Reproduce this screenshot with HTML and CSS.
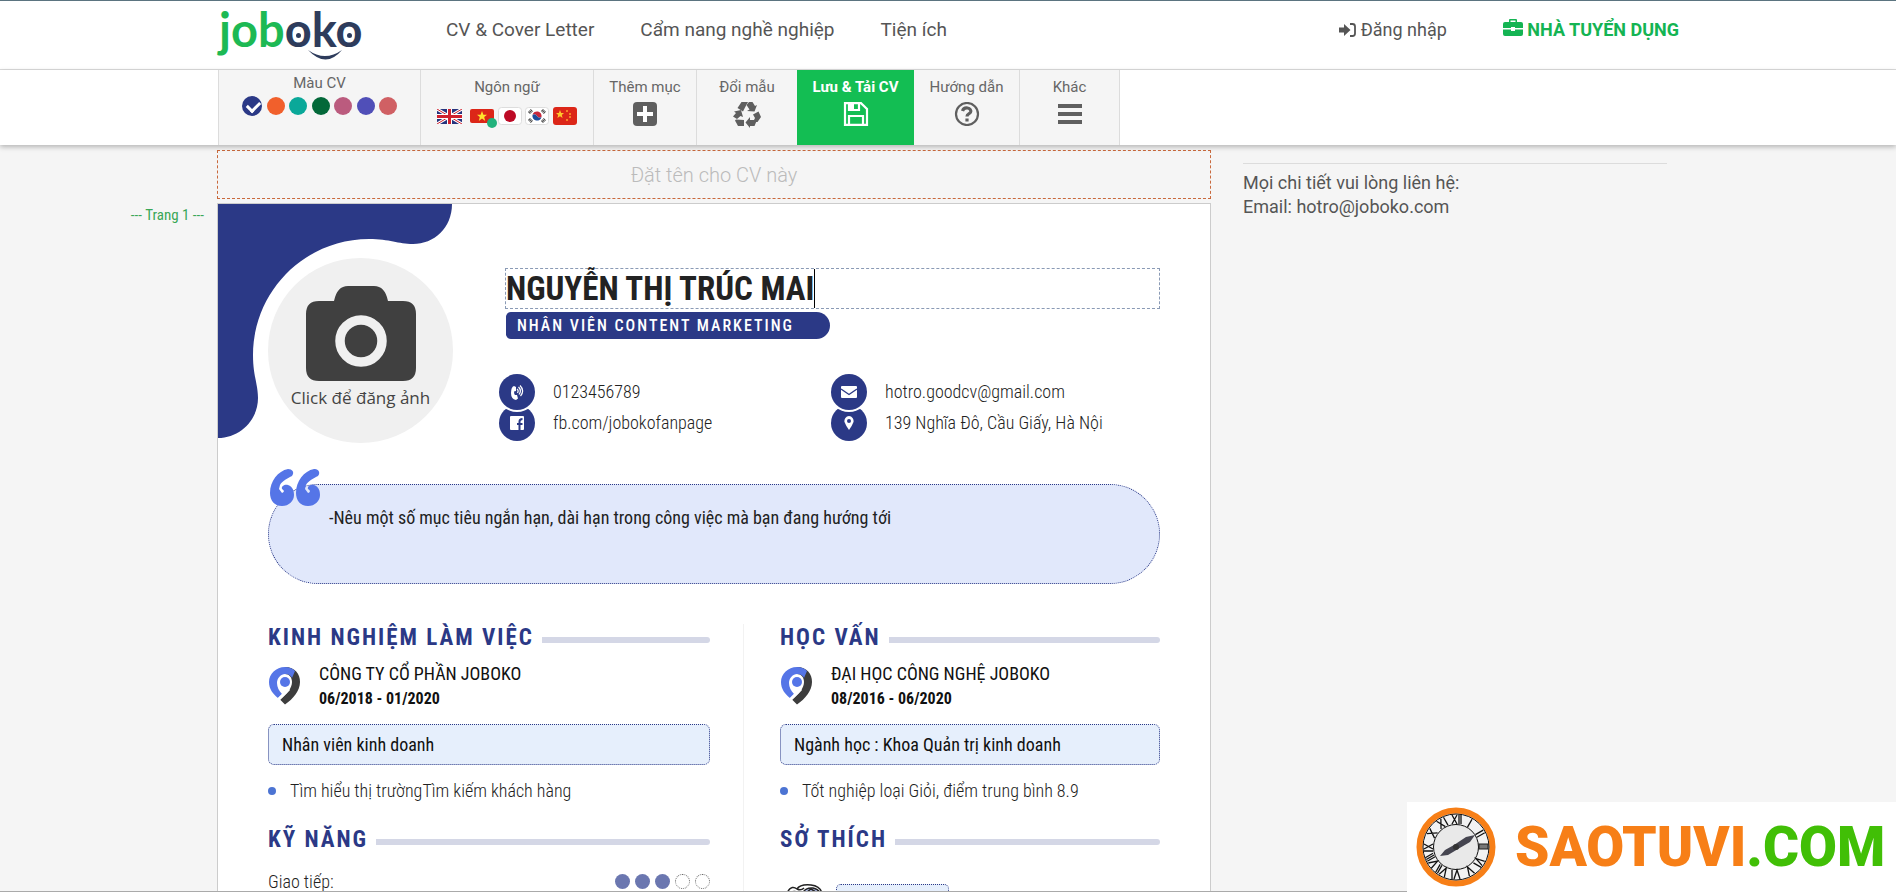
FILE: index.html
```html
<!DOCTYPE html>
<html lang="vi">
<head>
<meta charset="utf-8">
<meta name="viewport" content="width=device-width, initial-scale=1">
<title>Joboko CV</title>
<link rel="stylesheet" href="styles.css">
</head>
<body>
<svg class="defs" aria-hidden="true">
  <symbol id="pin" viewBox="0 0 32 40">
    <path fill="#3d3d3d" d="M16 1C26 1 31 8 31 16C31 25 24 33 16 38.500L11 33.500C18 28 23 22 23 16C23 11 20 8 16 8Z"/>
    <path fill="#5575e7" d="M16 1C7 1 0 8 0 16C0 23 4 28 9 32L13 28C10 25 8 21 8 17C8 12 12 8 16 8C20 8 22 10 23 12L26 5C23 2 20 1 16 1Z"/>
    <circle cx="16" cy="16" r="5" fill="#5575e7"/>
    <path fill="none" stroke="#fff" stroke-width="3" d="M10 33L20 23"/>
  </symbol>
</svg>

<header class="header">
  <div class="container header-row">
    <a class="logo" href="#" aria-label="joboko"><span class="logo-job">job</span><span class="logo-oko"><span class="eye">o</span>k<span class="eye">o</span></span>
      <svg class="logo-smile" viewBox="0 0 34 10" aria-hidden="true"><path fill="#2e3c5c" d="M0 0Q17 12 34 0Q18 19 0 0Z"/></svg>
    </a>
    <nav class="menu">
      <a href="#">CV &amp; Cover Letter</a>
      <a href="#">Cẩm nang nghề nghiệp</a>
      <a href="#">Tiện ích</a>
    </nav>
    <div class="account">
      <a href="#"><svg width="17" height="14" viewBox="0 0 17 14" aria-hidden="true"><path fill="#555" d="M0 4.500H5V1L11.500 7L5 13V9.500H0Z"/><path fill="none" stroke="#555" stroke-width="1.800" d="M11 1H13.500Q16 1 16 3.500V10.500Q16 13 13.500 13H11"/></svg> Đăng nhập</a>
      <a class="employer" href="#"><svg width="20" height="18" viewBox="0 0 20 18" aria-hidden="true"><path fill="#14b453" d="M6 3V1Q6 0 7 0H13Q14 0 14 1V3H18Q20 3 20 5V9H12V8H8V9H0V5Q0 3 2 3ZM7.500 3H12.500V1.500H7.500ZM0 10.500H8V12H12V10.500H20V15Q20 17 18 17H2Q0 17 0 15Z"/></svg> NHÀ TUYỂN DỤNG</a>
    </div>
  </div>
</header>

<div class="toolbar">
  <div class="container tools">
    <fieldset class="tool tool-colors">
      <legend class="tool-label">Màu CV</legend>
      <div class="swatches">
        <input class="swatch navy" type="radio" name="color" aria-label="Xanh navy" checked>
        <input class="swatch orange" type="radio" name="color" aria-label="Cam">
        <input class="swatch teal" type="radio" name="color" aria-label="Xanh ngọc">
        <input class="swatch green" type="radio" name="color" aria-label="Xanh lá">
        <input class="swatch pink" type="radio" name="color" aria-label="Hồng">
        <input class="swatch violet" type="radio" name="color" aria-label="Tím">
        <input class="swatch coral" type="radio" name="color" aria-label="San hô">
      </div>
    </fieldset>
    <div class="tool tool-lang">
      <span class="tool-label">Ngôn ngữ</span>
      <div class="flags">
        <button class="flag" aria-label="English"><svg width="25" height="15" viewBox="0 0 25 15"><rect width="25" height="15" rx="2" fill="#26337d"/><path stroke="#fff" stroke-width="3" d="M0 0L25 15M25 0L0 15"/><path stroke="#d0202e" stroke-width="1" d="M0 0L25 15M25 0L0 15"/><path stroke="#fff" stroke-width="5" d="M12.500 0V15M0 7.500H25"/><path stroke="#d0202e" stroke-width="3" d="M12.500 0V15M0 7.500H25"/></svg></button>
        <button class="flag flag-current" aria-label="Tiếng Việt"><svg width="24" height="14" viewBox="0 0 24 14"><rect width="24" height="14" rx="2" fill="#dc2618"/><path fill="#ffe42c" d="M12 2L13.400 5.800H17L14.200 8L15.200 12L12 9.600L8.800 12L9.800 8L7 5.800H10.600Z"/></svg></button>
        <button class="flag" aria-label="日本語"><svg width="24" height="18" viewBox="0 0 24 18"><rect x=".5" y=".5" width="23" height="17" rx="3" fill="#fff" stroke="#ddd"/><circle cx="12" cy="9" r="6" fill="#bd0a25"/></svg></button>
        <button class="flag" aria-label="한국어"><svg width="24" height="18" viewBox="0 0 24 18"><rect x=".5" y=".5" width="23" height="17" rx="3" fill="#fff" stroke="#ddd"/><path fill="#c8283c" d="M7.500 8A4.500 4.500 0 0 1 16.500 10Q14 12 12 9T7.500 8"/><path fill="#1d4d9c" d="M7.500 8A4.500 4.500 0 0 0 16.500 10Q14 12 12 9T7.500 8"/><path stroke="#444" stroke-width="3" stroke-dasharray="1 .5" d="M4 6L7 3M17 3L20 6M4 12L7 15M17 15L20 12"/></svg></button>
        <button class="flag" aria-label="中文"><svg width="24" height="18" viewBox="0 0 24 18"><rect width="24" height="18" rx="3" fill="#dc2618"/><path fill="#ffc72c" d="M7 3L8.200 6H11L8.800 8L9.600 11L7 9.300L4.400 11L5.200 8L3 6H5.800Z"/><circle cx="14" cy="4" r="1" fill="#ffa02c"/><circle cx="17" cy="7" r="1" fill="#ffa02c"/><circle cx="17" cy="10" r="1" fill="#ffa02c"/><circle cx="14" cy="13" r="1" fill="#ffa02c"/></svg></button>
      </div>
    </div>
    <button class="tool tool-add"><span class="tool-label">Thêm mục</span><svg width="26" height="24" viewBox="0 0 26 24"><rect x="1" width="24" height="24" rx="4" fill="#5f5f5f"/><path stroke="#fff" stroke-width="4" d="M13 4V20M5 12H21"/></svg></button>
    <button class="tool tool-swap"><span class="tool-label">Đổi mẫu</span><svg width="28" height="26" viewBox="0 0 28 26"><g fill="#5f5f5f"><path d="M8.500 0H15L12 5.500L10 9.500L4.500 6Z"/><path d="M16 0H19.500L22 4L24 3L21.500 9.500L14 9L16.500 7.500L13.500 3Z"/><path d="M20 12.500L25.500 9.500L28 15L24.500 20H20L22 16Z"/><path d="M17 15V18H24L21.500 24H17V26L12.500 20.500Z"/><path d="M11 18V24H5L2 18.500L3 17.500Z"/><path d="M1 9.500L8 8L10 15L7.500 14L4 17L0 14.500L3 11Z"/></g></svg></button>
    <button class="tool tool-save"><span class="tool-label">Lưu &amp; Tải CV</span><svg width="26" height="24" viewBox="0 0 26 24" fill="none" stroke="#fff" stroke-width="2.200"><path d="M2 1.200H18L24 7V22.800H2Z"/><path d="M6 1V8H16V1M6 23V14H20V23"/><path d="M8.500 1V8" stroke-width="5"/></svg></button>
    <button class="tool tool-help"><span class="tool-label">Hướng dẫn</span><svg width="26" height="24" viewBox="0 0 26 24" fill="none" stroke="#5f5f5f"><circle cx="13" cy="12" r="11" stroke-width="2.200"/><path stroke-width="3.200" d="M8.500 9C9.500 6 12 5.800 13.500 6C16 6.300 17.500 8.500 16.500 10.300C15.500 12 13 12 13 14.500M13 16.500V19.500"/></svg></button>
    <button class="tool tool-more"><span class="tool-label">Khác</span><svg width="26" height="24" viewBox="0 0 26 24"><path stroke="#5f5f5f" stroke-width="4" d="M1 4H25M1 12H25M1 20H25"/></svg></button>
  </div>
</div>

<main class="main">
  <aside class="page-label">--- Trang 1 ---</aside>
  <div class="editor">
    <input class="cv-name" type="text" placeholder="Đặt tên cho CV này" aria-label="Đặt tên cho CV này">
    <article class="cv">
      <svg class="cv-blob" width="235" height="235" viewBox="0 0 235 235" aria-hidden="true"><path fill="#2b3986" d="M0 0H234C234 24 216 40 195 40C180 40 172 35 151 35C87 35 35 87 35 151C35 172 40 180 40 194C40 216 22 234 0 234Z"/></svg>
      <section class="intro">
        <button class="avatar">
          <svg width="112" height="96" viewBox="0 0 112 96" aria-hidden="true"><path fill="#404040" d="M1 29Q1 16 14 16H29Q32 1 43 1H69Q80 1 83 16H98Q111 16 111 29V83Q111 96 98 96H14Q1 96 1 83Z"/><circle cx="56" cy="56" r="21" fill="#404040" stroke="#f0f0f0" stroke-width="9.500"/></svg>
          <span>Click để đăng ảnh</span>
        </button>
        <div class="identity">
          <div class="name-box"><input class="person" type="text" value="NGUYỄN THỊ TRÚC MAI" aria-label="Họ tên"><span class="caret"></span></div>
          <p class="position">NHÂN VIÊN CONTENT MARKETING</p>
          <ul class="contacts">
            <li><span class="badge"><svg width="14" height="16" viewBox="0 0 14 16"><path fill="#fff" d="M4 2L6 3V7L4 7.500Q4 10 5 11L7 11L8 14.500L6 16Q1 15 1 9Q1 3 4 2"/><path fill="none" stroke="#fff" stroke-width="1.200" d="M7 5Q9 6.500 7.500 9M8.500 3Q12 6.500 9 10.500M10 1.500Q15 6.500 10.500 12"/></svg></span>0123456789</li>
            <li><span class="badge"><svg width="16" height="12" viewBox="0 0 16 12"><rect width="16" height="12" rx="1" fill="#fff"/><path fill="none" stroke="#2b3986" stroke-width="1.400" d="M0 3L8 8.500L16 3"/></svg></span>hotro.goodcv@gmail.com</li>
            <li><span class="badge"><svg width="14" height="14" viewBox="0 0 14 14"><rect width="14" height="14" rx="1" fill="#fff"/><path fill="none" stroke="#2b3986" stroke-width="2" d="M9.500 14V5.500Q9.500 3 12.500 3M7 8H12.500"/></svg></span>fb.com/jobokofanpage</li>
            <li><span class="badge"><svg width="10" height="14" viewBox="0 0 10 14"><path fill="#fff" fill-rule="evenodd" d="M5 0A5 5 0 0 1 9.500 6Q8 10 5 14Q2 10 .5 6A5 5 0 0 1 5 0M5 3A2 2 0 1 0 5 7A2 2 0 1 0 5 3"/></svg></span>139 Nghĩa Đô, Cầu Giấy, Hà Nội</li>
          </ul>
        </div>
      </section>
      <section class="goal">
        <svg class="quote" width="50" height="37" viewBox="0 0 50 37" aria-hidden="true"><g id="q" fill="#5575e7"><path d="M18 0C22 0 25 3 22 7C18 9 12 12 10 16L9 20L12 24C15 23 14 21 12 20C11 17 15 15 18 16C23 18 24 22 24 26C24 32 19 37 12 37C4 37 0 31 0 24C0 12 8 2 18 0Z"/></g><use href="#q" x="26"/></svg>
        <p>-Nêu một số mục tiêu ngắn hạn, dài hạn trong công việc mà bạn đang hướng tới</p>
      </section>
      <div class="columns">
        <div class="column">
          <section class="block">
            <h2>KINH NGHIỆM LÀM VIỆC</h2>
            <div class="place"><svg width="32" height="40"><use href="#pin"/></svg><div><p>CÔNG TY CỔ PHẦN JOBOKO</p><p class="dates">06/2018 - 01/2020</p></div></div>
            <p class="role">Nhân viên kinh doanh</p>
            <ul class="details"><li>Tìm hiểu thị trườngTìm kiếm khách hàng</li></ul>
          </section>
          <section class="block">
            <h2>KỸ NĂNG</h2>
            <div class="skill"><span>Giao tiếp:</span><span class="dots"><i class="on"></i><i class="on"></i><i class="on"></i><i></i><i></i></span></div>
          </section>
        </div>
        <div class="column">
          <section class="block">
            <h2>HỌC VẤN</h2>
            <div class="place"><svg width="32" height="40"><use href="#pin"/></svg><div><p>ĐẠI HỌC CÔNG NGHỆ JOBOKO</p><p class="dates">08/2016 - 06/2020</p></div></div>
            <p class="role">Ngành học : Khoa Quản trị kinh doanh</p>
            <ul class="details"><li>Tốt nghiệp loại Giỏi, điểm trung bình 8.9</li></ul>
          </section>
          <section class="block">
            <h2>SỞ THÍCH</h2>
            <div class="hobby"><svg width="36" height="24" viewBox="0 0 36 24" fill="none" stroke="#222" stroke-width="1.500" aria-hidden="true"><path fill="#b9c6f3" d="M14 14Q16 3 26 4Q36 6 33 18H16Z"/><path d="M1 7Q5 1 10 5Q13 0 24 1Q33 2 35 9M10 5Q14 7 17 4M2 10Q8 4 14 12"/><path d="M20 8L24 5L29 8L27 13H21Z"/></svg><span class="hobby-box"></span></div>
          </section>
        </div>
      </div>
    </article>
  </div>
  <aside class="support">
    <p>Mọi chi tiết vui lòng liên hệ:<br>Email: hotro@joboko.com</p>
  </aside>
</main>

<div class="watermark">
  <svg width="80" height="80" viewBox="0 0 80 80" aria-hidden="true">
    <circle cx="40" cy="40" r="36.500" fill="#f2f2f2" stroke="#f77f17" stroke-width="6"/>
    <circle cx="40" cy="40" r="33" fill="none" stroke="#111" stroke-width="1"/>
    <circle cx="40" cy="40" r="22.500" fill="#e9e9e9" stroke="#111" stroke-width="1"/>
    <g stroke="#111" stroke-width="1.300" fill="none">
      <path d="M36 8L41 17M41 8L36 17M43 8V17M45 8V17"/>
      <path d="M40 8V17" transform="rotate(30 40 40)"/>
      <path d="M39 8V17M42 8V17" transform="rotate(60 40 40)"/>
      <path d="M38 8L40 17L43 8M45 8V17" transform="rotate(120 40 40)"/>
      <path d="M37 8L40 17L43 8" transform="rotate(150 40 40)"/>
      <path d="M36 8L39 17L42 8M44 8V17" transform="rotate(180 40 40)"/>
      <path d="M35 8L38 17L41 8M43 8V17M45 8V17" transform="rotate(210 40 40)"/>
      <path d="M34 8L37 17L40 8M42 8V17M44 8V17M46 8V17" transform="rotate(240 40 40)"/>
      <path d="M36 8V17M38 8L43 17M43 8L38 17" transform="rotate(270 40 40)"/>
      <path d="M37 8L43 17M43 8L37 17" transform="rotate(300 40 40)"/>
      <path d="M36 8L41 17M41 8L36 17M44 8V17" transform="rotate(330 40 40)"/>
    </g>
    <rect x="63" y="37" width="9" height="5" fill="#777" stroke="#222"/>
    <path fill="#454550" d="M24 49L29 43L38 38L50 30L59 28L54 35L42 42L32 48Z"/>
    <circle cx="40" cy="40" r="3" fill="#333"/>
  </svg>
  <p class="watermark-text">SAOTUVI<span>.COM</span></p>
</div>
</body>
</html>
```
FILE: styles.css
```css
* { box-sizing: border-box; }
body, p, h2, ul, fieldset { margin: 0; padding: 0; }
ul { list-style: none; }
a { color: inherit; text-decoration: none; }
button, input { font: inherit; color: inherit; }
button { border: 0; padding: 0; background: none; cursor: pointer; }

body {
  height: 100vh;
  overflow: hidden;
  background: #f5f5f5;
  border-top: 1px solid #5b7480;
  color: #555;
  font: 18px/24px Roboto, sans-serif;
}
body::after {
  content: "";
  position: fixed;
  inset: auto 0 0 0;
  height: 1px;
  background: #aaa;
}
.defs { display: none; }
.container { max-width: 1462px; margin: 0 auto; }

.header { background: #fff; border-bottom: 1px solid #dcdcdc; }
.header-row { display: flex; align-items: center; height: 68px; }
.logo {
  position: relative;
  width: 144px;
  height: 68px;
  margin-right: 85px;
  padding-left: 2px;
  font: 700 47px/56px Lato, sans-serif;
}
.logo-job { color: #1db954; }
.logo-oko { color: #2e3c5c; }
.eye { position: relative; }
.eye::after {
  content: "";
  position: absolute;
  left: calc(50% - 2px);
  top: 32px;
  width: 5px;
  height: 5px;
  border-radius: 50%;
  background: #2e3c5c;
}
.logo-smile { position: absolute; left: 91px; top: 49px; width: 34px; height: 10px; }
.menu { display: flex; gap: 46px; padding-bottom: 10px; font-size: 19px; }
.account { display: flex; gap: 56px; margin-left: auto; padding-bottom: 10px; }
.account svg { vertical-align: -1px; }
.employer { color: #14b453; font-weight: 700; }

.toolbar { position: relative; background: #fff; box-shadow: 0 2px 5px #0004; }
.tools { display: flex; height: 75px; padding-left: 1px; font-size: 15px; line-height: 20px; }
.tool {
  display: flex;
  flex-direction: column;
  align-items: center;
  gap: 5px;
  min-width: 0;
  padding-top: 7px;
  border: 0;
  border-right: 1px solid #dcdcdc;
  background: #f5f5f5;
}
.tool-label { padding: 0; white-space: nowrap; color: #666; }
.tool-colors { width: 203px; gap: 3px; padding-top: 3px; border-left: 1px solid #dcdcdc; }
.tool-colors .tool-label { float: left; width: 100%; text-align: center; }
.tool-lang { width: 173px; gap: 10px; }
.tool-add { width: 103px; }
.tool-swap { width: 100px; border-right: 0; }
.tool-save { width: 117px; border-right: 0; background: #13be53; font-weight: 700; }
.tool-save .tool-label { color: #fff; }
.tool-help { width: 106px; }
.tool-more { width: 100px; }
.swatches { display: flex; align-items: center; justify-content: space-between; width: 155px; }
.swatch { appearance: none; width: 18px; height: 18px; margin: 0; border-radius: 50%; }
.swatch:checked { position: relative; width: 20px; height: 20px; }
.swatch:checked::after {
  content: "";
  position: absolute;
  left: 5px;
  top: 5px;
  width: 10px;
  height: 6px;
  border: solid #fff;
  border-width: 0 0 3px 3px;
  transform: rotate(-45deg);
}
.navy { background: #2b3986; }
.orange { background: #f1602c; }
.teal { background: #0aa899; }
.green { background: #036839; }
.pink { background: #bb5b7e; }
.violet { background: #504fb8; }
.coral { background: #d06064; }
.flags { display: flex; align-items: center; justify-content: space-between; width: 140px; }
.flag { display: flex; }
.flag-current { position: relative; margin-left: 4px; }
.flag-current::after {
  content: "";
  position: absolute;
  right: -3px;
  bottom: -5px;
  width: 10px;
  height: 10px;
  border-radius: 50%;
  background: #22b27c;
}

.main {
  display: grid;
  grid-template-columns: 1fr minmax(0, 994px) minmax(0, 468px) 1fr;
  padding-top: 5px;
}
.page-label {
  padding: 55px 13px 0 0;
  text-align: right;
  color: #3aa757;
  font: 15px/20px "Roboto Condensed", Roboto, sans-serif;
}
.cv-name {
  display: block;
  width: 100%;
  height: 49px;
  border: 1px dashed #c9693c;
  background: transparent;
  text-align: center;
  font-size: 20px;
  font-weight: 300;
}
.cv-name::placeholder { color: #bbb; }
.cv {
  position: relative;
  margin-top: 4px;
  padding: 0 50px;
  border: 1px solid #ccc;
  background: #fff;
  color: #222;
  font: 300 18px/24px "Roboto Condensed", Roboto, sans-serif;
}
.cv-blob { position: absolute; left: 0; top: 0; }
.intro { display: flex; align-items: flex-start; position: relative; padding-top: 54px; }
.avatar {
  display: flex;
  flex-direction: column;
  align-items: center;
  gap: 5px;
  width: 185px;
  height: 185px;
  padding-top: 27px;
  border-radius: 50%;
  background: #f0f0f0;
  color: #444;
  font: 500 17px/24px "Open Sans", "Noto Sans", sans-serif;
  white-space: nowrap;
}
.identity { flex: 1; min-width: 0; margin-left: 52px; padding-top: 10px; }
.name-box { display: flex; align-items: center; height: 41px; border: 1px dashed #8a9ab5; }
.person {
  field-sizing: content;
  height: 48px;
  padding: 0;
  border: 0;
  outline: 0;
  background: none;
  font-size: 33px;
  font-weight: 700;
  line-height: 48px;
}
.caret { width: 1px; height: 39px; background: #000; }
.position {
  width: 324px;
  margin: 3px 0 0 1px;
  padding-left: 11px;
  border-radius: 5px 14px 14px 5px;
  background: #2b3986;
  color: #fff;
  font-size: 16px;
  font-weight: 500;
  line-height: 27px;
  letter-spacing: 2px;
}
.contacts { display: grid; grid-template-columns: 332px 1fr; padding-top: 37px; margin-left: -6px; }
.contacts li { display: flex; align-items: center; gap: 18px; height: 31px; white-space: nowrap; }
.badge {
  display: grid;
  place-items: center;
  width: 36px;
  height: 36px;
  border-radius: 50%;
  background: #2b3986;
  box-shadow: 0 0 0 2px #fff;
}
.contacts li:nth-child(-n+2) .badge { z-index: 1; }
.contacts li:nth-child(n+3) .badge { box-shadow: none; }

.goal {
  position: relative;
  height: 100px;
  margin-top: 41px;
  padding: 21px 60px;
  border: 1px dotted #2b3986;
  border-radius: 50px;
  background: #e1e8fb;
  font-weight: 400;
}
.quote { position: absolute; left: 1px; top: -16px; }

.columns { display: grid; grid-template-columns: 475px 1fr; padding-top: 40px; }
.column + .column { padding-left: 36px; border-left: 1px solid #f2f2f2; }
.column:first-child { padding-right: 33px; }
.block h2 {
  display: flex;
  align-items: center;
  gap: 8px;
  height: 28px;
  color: #2b3986;
  font-size: 23px;
  font-weight: 700;
  letter-spacing: 2px;
  white-space: nowrap;
}
.block h2::after { content: ""; flex: 1; height: 6px; margin-top: 4px; border-radius: 0 3px 3px 0; background: #d4d7e6; }
.place { display: flex; gap: 18px; padding-top: 9px; font-weight: 400; color: #111; }
.place svg { margin: 5px 0 0 1px; }
.place p { line-height: 25px; }
.place .dates { font-size: 16px; font-weight: 700; }
.role {
  margin-top: 13px;
  padding: 0 13px;
  border: 1px dotted #2b3986;
  border-radius: 6px;
  background: #e6effc;
  color: #111;
  font-weight: 400;
  line-height: 39px;
}
.details { padding-top: 14px; }
.details li { display: flex; align-items: center; gap: 14px; }
.details li::before { content: ""; width: 8px; height: 8px; border-radius: 50%; background: #4c74d3; }
.block + .block { padding-top: 23px; }
.skill { display: flex; align-items: center; justify-content: space-between; padding-top: 15px; height: 40px; }
.dots { display: flex; gap: 5px; }
.dots i { width: 15px; height: 15px; border: 1px dotted #666; border-radius: 50%; }
.dots .on { border: 0; background: #6b77b0; }
.hobby { display: flex; gap: 13px; padding: 30px 0 0 7px; }
.hobby-box { width: 113px; height: 40px; border: 1px dotted #2b3986; border-radius: 5px; background: #e6effc; }

.support { padding: 13px 12px 0 32px; }
.support p { padding-top: 7px; border-top: 1px solid #dcdcdc; }

.watermark {
  position: fixed;
  z-index: 2;
  right: 0;
  bottom: 0;
  display: flex;
  align-items: center;
  gap: 19px;
  width: 489px;
  height: 90px;
  padding-left: 9px;
  background: #fff;
}
.watermark-text { color: #f77f17; font: 900 55px/64px Roboto, sans-serif; }
.watermark-text span { color: #41bf06; }
```
